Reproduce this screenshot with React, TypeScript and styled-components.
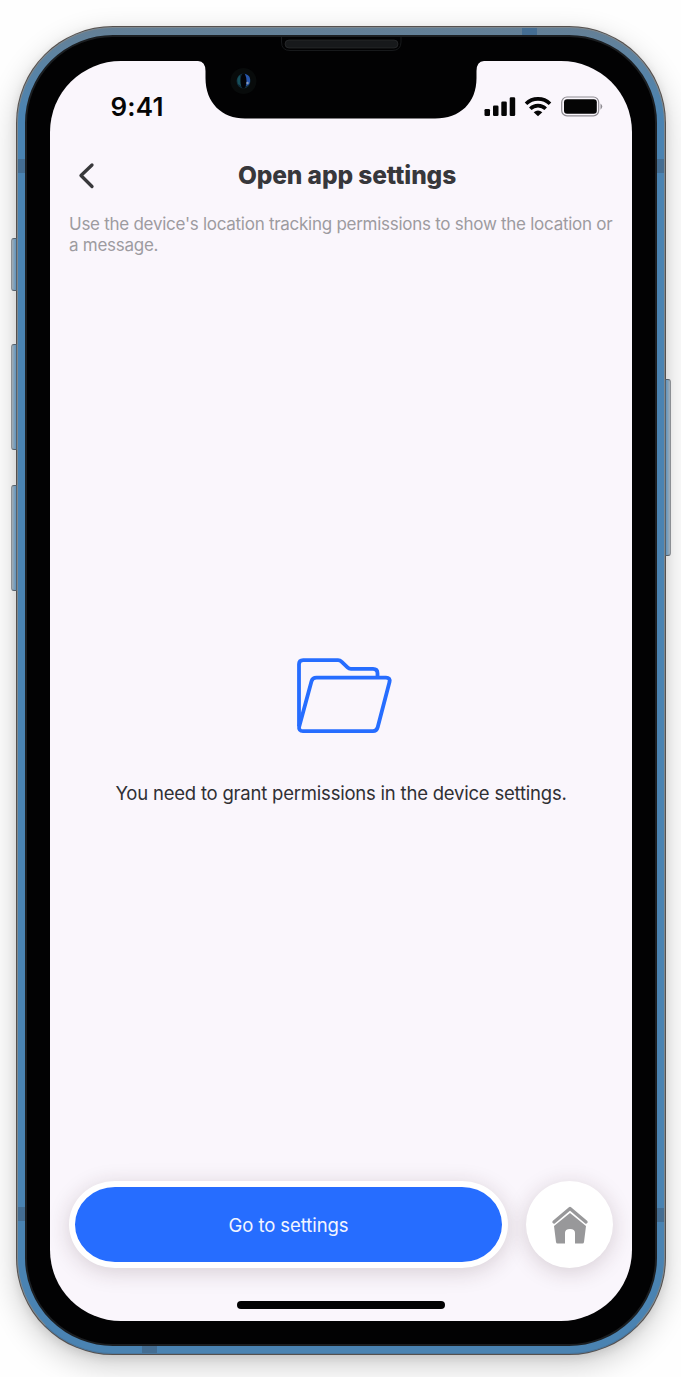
import React from "react";
import styled, { createGlobalStyle } from "styled-components";

const GlobalStyle = createGlobalStyle`
  * { box-sizing: border-box; }
  body {
    margin: 0;
    background: #fefefe;
    font-family: Inter, "Liberation Sans", sans-serif;
  }
`;

const Stage = styled.main`
  width: 681px;
  height: 1377px;
  padding: 26px 15px 22px 16px;
  overflow: hidden;
`;

const Frame = styled.div`
  position: relative;
  width: 650px;
  height: 1329px;
  padding: 1px;
  border-radius: 97px;
  background: #55504e;
  box-shadow: 0 10px 30px rgba(0, 0, 0, 0.2), 0 3px 10px rgba(0, 0, 0, 0.09);
`;

const Rail = styled.div`
  height: 100%;
  padding: 7px;
  border: 1px solid #7d8890;
  border-bottom-color: #4a779e;
  border-radius: 96px;
  background: linear-gradient(#647f95 0, #5f83a0 24px, #4a83b2 90px, #4a83b2 100%);
`;

const Bezel = styled.div`
  height: 100%;
  padding: 24px 23px 23px;
  border-radius: 88px;
  background: #020203;
  border: 2px solid #1b1e21;
`;

const SideButton = styled.span<{ $side: "left" | "right"; $top: number; $height: number }>`
  position: absolute;
  ${(p) => p.$side}: -5px;
  top: ${(p) => p.$top}px;
  width: 6px;
  height: ${(p) => p.$height}px;
  border: 1px solid #55606b;
  border-${(p) => p.$side}-color: #8b8f94;
  border-radius: ${(p) => (p.$side === "left" ? "3px 0 0 3px" : "0 3px 3px 0")};
  background: linear-gradient(to ${(p) => (p.$side === "left" ? "right" : "left")}, #a3adb5, #6195bf);
`;

const Antenna = styled.span<{ $left: number; $top: number; $across?: boolean }>`
  position: absolute;
  left: ${(p) => p.$left}px;
  top: ${(p) => p.$top}px;
  width: ${(p) => (p.$across ? 15 : 7)}px;
  height: ${(p) => (p.$across ? 7 : 14)}px;
  background: #446d92;
`;

const Screen = styled.div`
  display: flex;
  flex-direction: column;
  height: 100%;
  border-radius: 71px;
  background: #faf6fc;
  overflow: hidden;
`;

const NotchArt = styled.svg`
  position: absolute;
  left: 180px;
  top: 10px;
`;

const StatusBar = styled.div`
  display: flex;
  justify-content: space-between;
  height: 84px;
  padding: 30px 29px 0 60.5px;
`;

const Clock = styled.time`
  font-size: 26px;
  line-height: 32px;
  font-weight: 600;
  letter-spacing: 0.2px;
  color: #050505;
`;

const StatusIcons = styled.svg`
  display: block;
`;

const Header = styled.header`
  display: grid;
  grid-template-columns: 72px 1fr 60px;
  align-items: center;
  height: 62px;
`;

const BackButton = styled.button`
  display: flex;
  padding: 0 0 0 28px;
  border: 0;
  background: none;
`;

const Title = styled.h1`
  margin: 0 0 2px;
  text-align: center;
  font-size: 24.5px;
  line-height: 30px;
  font-weight: 780;
  letter-spacing: -0.1px;
  color: #37373b;
  white-space: nowrap;
`;

const Description = styled.p`
  margin: 7px 0 0 19px;
  height: 42px;
  font-size: 17px;
  line-height: 21px;
  letter-spacing: -0.27px;
  color: #9d9ba0;
  white-space: nowrap;
`;

const EmptyState = styled.section`
  display: flex;
  flex: 1;
  flex-direction: column;
  align-items: center;
  padding-top: 399px;
`;

const FolderIcon = styled.svg`
  display: block;
  margin-left: 6px;
`;

const Message = styled.p`
  margin: 44px 0 0;
  font-size: 18.5px;
  line-height: 28px;
  letter-spacing: -0.21px;
  color: #303034;
  white-space: nowrap;
`;

const ActionBar = styled.footer`
  display: flex;
  flex: none;
  justify-content: space-between;
  height: 87px;
  margin: 0 19px 33px;
`;

const raised = "0 4px 22px rgba(55, 25, 35, 0.18)";

const PrimaryButton = styled.button`
  width: 439px;
  height: 87px;
  padding: 0;
  border: 6px solid #fff;
  border-radius: 46px / 43.5px;
  background: #266dff;
  box-shadow: ${raised};
  font: 400 18.5px/28px Inter, "Liberation Sans", sans-serif;
  letter-spacing: -0.08px;
  color: #f2f5ff;
`;

const HomeButton = styled.button`
  display: grid;
  place-items: center;
  width: 87px;
  height: 87px;
  padding: 0;
  border: 0;
  border-radius: 50%;
  background: #fff;
  box-shadow: ${raised};
`;

const HomeIndicator = styled.div`
  flex: none;
  align-self: center;
  width: 208px;
  height: 8px;
  margin-bottom: 12px;
  border-radius: 4px;
  background: #020203;
`;

const buttons = [
  { side: "left", top: 212, height: 53 },
  { side: "left", top: 318, height: 106 },
  { side: "left", top: 459, height: 106 },
  { side: "right", top: 353, height: 177 },
] as const;

const antennas = [
  { left: 2, top: 133 },
  { left: 641, top: 133 },
  { left: 2, top: 1181 },
  { left: 641, top: 1182 },
  { left: 506, top: 2, across: true },
  { left: 126, top: 1320, across: true },
];

function Notch() {
  return (
    <NotchArt width="290" height="86" viewBox="0 0 290 86" aria-hidden="true">
      <path
        d="M0 25H2Q9.500 25.500 9.500 35V42C9.500 67 26 82.500 49 82.500H239C264 82.500 280.500 67 280.500 42V35Q280.500 25.500 288 25H290V18H0Z"
        fill="#020203"
      />
      <path d="M85.500 1V6Q85.500 14.500 94 14.500H196Q205 14.500 205 6V1" fill="#020203" stroke="#17191b" />
      <rect x="89" y="4" width="113" height="8" rx="4" fill="#17191b" stroke="#303234" strokeWidth=".6" />
      <circle cx="47.500" cy="45" r="13" fill="#080b0b" />
      <ellipse cx="47.500" cy="45" rx="7" ry="7.500" fill="#102b39" />
      <path d="M49 38Q55 39 54 46Q53 50 49 50Z" fill="#2856ac" />
      <path d="M44 39Q40 42 42 48L45 50Z" fill="#17505b" />
      <ellipse cx="47.500" cy="45" rx="3" ry="7.500" fill="#020307" />
      <circle cx="51.500" cy="47" r="1.200" fill="#8898b3" />
    </NotchArt>
  );
}

function DeviceStatus() {
  return (
    <StatusIcons width="120" height="32" viewBox="0 0 120 32" aria-hidden="true">
      <g fill="#050505">
        <rect x="1.500" y="18" width="5.500" height="7" rx="1.300" />
        <rect x="10" y="14.500" width="5.500" height="10.500" rx="1.300" />
        <rect x="18.300" y="10.500" width="5.500" height="14.500" rx="1.300" />
        <rect x="26.700" y="6.300" width="5.500" height="18.700" rx="1.300" />
      </g>
      <g fill="none" stroke="#050505" strokeWidth="3.600">
        <path d="M43 12.800A17 17 0 0 1 67 12.800" />
        <path d="M47.300 17.800A11 11 0 0 1 62.700 17.800" />
      </g>
      <path d="M50.700 21.300Q55 17.500 59.300 21.300L55 25.300Z" fill="#050505" />
      <rect x="78.700" y="6" width="37" height="18.800" rx="5.300" fill="none" stroke="#8e8b91" strokeWidth="1.200" />
      <rect x="81" y="8.200" width="32.800" height="14.500" rx="3" fill="#050505" />
      <path d="M117.500 12.500Q121 15.500 117.500 18.700Z" fill="#8e8b91" />
    </StatusIcons>
  );
}

export default function App() {
  return (
    <>
      <GlobalStyle />
      <Stage>
        <Frame>
          {buttons.map((b) => (
            <SideButton key={b.top} $side={b.side} $top={b.top} $height={b.height} />
          ))}
          <Rail>
            <Bezel>
              <Screen>
                <StatusBar>
                  <Clock>9:41</Clock>
                  <DeviceStatus />
                </StatusBar>
                <Header>
                  <BackButton aria-label="Back">
                    <svg width="18" height="28" viewBox="0 0 18 28" fill="none">
                      <path d="M14 3L3 13.500L14 24.500" stroke="#38383b" strokeWidth="3.300" strokeLinecap="round" strokeLinejoin="round" />
                    </svg>
                  </BackButton>
                  <Title>Open app settings</Title>
                </Header>
                <Description>
                  Use the device's location tracking permissions to show the location or
                  <br />a message.
                </Description>
                <EmptyState>
                  <FolderIcon width="98" height="80" viewBox="0 0 98 80" fill="none" stroke="#266dff" strokeWidth="3.800" strokeLinejoin="round">
                    <path d="M4 71V9.300Q4 5.100 8.200 5.100H43Q45 5.100 46.500 6.600L52.500 12.300Q54 13.800 56 13.800H78Q82.500 13.800 82.500 18.300V21.300" />
                    <path d="M4.100 72L16.500 26.300Q17.500 22.600 21.500 22.600H91Q95.500 22.600 94.500 27.100L82.700 72.300Q81.700 76.200 78 76.200H8Q3.500 76.200 4.100 71.200Z" />
                  </FolderIcon>
                  <Message>You need to grant permissions in the device settings.</Message>
                </EmptyState>
                <ActionBar>
                  <PrimaryButton>Go to settings</PrimaryButton>
                  <HomeButton aria-label="Home">
                    <svg width="38" height="40" viewBox="0 0 38 40">
                      <path d="M3 17L19 3.500L35 17" fill="none" stroke="#98989a" strokeWidth="3.400" strokeLinecap="round" strokeLinejoin="round" />
                      <path d="M19 8L35 21L33 37Q32.800 38.500 31.500 38.500H24V28Q24 24 19 24Q14 24 14 28V38.500H6.500Q5.200 38.500 5 37L3 21Z" fill="#98989a" />
                    </svg>
                  </HomeButton>
                </ActionBar>
                <HomeIndicator />
              </Screen>
            </Bezel>
          </Rail>
          {antennas.map((a, i) => (
            <Antenna key={i} $left={a.left} $top={a.top} $across={a.across} />
          ))}
          <Notch />
        </Frame>
      </Stage>
    </>
  );
}
